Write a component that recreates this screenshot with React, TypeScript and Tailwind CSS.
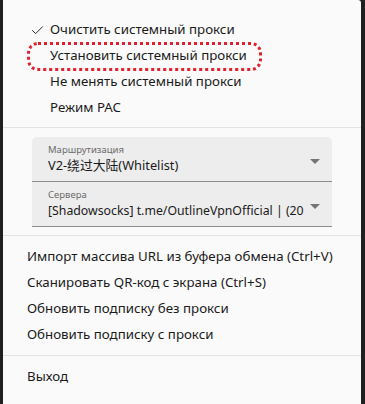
import { Check } from 'lucide-react'

const font = { fontFamily: '"Noto Sans", "Noto Sans CJK SC", sans-serif' }

function Divider() {
  return <div className="h-px bg-[#e3e3e3] my-[6px]" />
}

function Select({ label, value, first, small }: { label: string; value: string; first?: boolean; small?: boolean }) {
  return (
    <div className={`relative bg-[#ededed] border-b border-[#8c8c8c] ${first ? 'rounded-t-[5px]' : ''} h-[45px] pl-4 pr-[20px] flex flex-col justify-center min-w-0`}>
      <div className="text-[9.5px] leading-[13px] text-[#6b6b6b]">{label}</div>
      <div className={`${small ? 'text-[12.3px]' : 'text-[12.8px]'} leading-[19px] text-[#1a1a1a] whitespace-nowrap overflow-hidden`}>{value}</div>
      <svg className="absolute right-[12px] top-[22px]" width="10" height="6" viewBox="0 0 10 6">
        <path d="M0 0 L10 0 L5 5 Z" fill="#757575" />
      </svg>
    </div>
  )
}

export default function App() {
  const proxyItems = [
    { label: 'Очистить системный прокси', checked: true },
    { label: 'Установить системный прокси' },
    { label: 'Не менять системный прокси' },
    { label: 'Режим PAC' },
  ]
  const actions = [
    'Импорт массива URL из буфера обмена (Ctrl+V)',
    'Сканировать QR-код с экрана (Ctrl+S)',
    'Обновить подписку без прокси',
    'Обновить подписку с прокси',
  ]

  return (
    <div className="w-[365px] h-[404px] bg-[#202020] flex pl-[3px] pr-[4px]" style={font}>
      <div className="flex-1 min-w-0 overflow-hidden bg-[#fafafa] rounded-tr-[3px] flex flex-col pt-[17px] text-[#1b1b1b]">
        <div className="flex flex-col">
          {proxyItems.map((it, i) => (
            <div key={i} className="relative h-[26px] flex items-center text-[13.3px]">
              <div className="w-[47px] flex justify-end pr-[5px]">
                {it.checked && <Check size={15} strokeWidth={1.5} className="text-[#1b1b1b]" />}
              </div>
              <span>{it.label}</span>
              {i === 1 && (
                <div className="absolute left-[24px] top-[-1px] w-[235px] h-[29px] rounded-[11px] border-[3px] border-dotted border-[#e0202a]" />
              )}
            </div>
          ))}
        </div>
        <Divider />
        <div className="px-[29px] pt-[3px] pb-[2px]">
          <Select first label="Маршрутизация" value="V2-绕过大陆(Whitelist)" />
          <Select small label="Сервера" value="[Shadowsocks] t.me/OutlineVpnOfficial | (20" />
        </div>
        <Divider />
        <div className="flex flex-col pt-[2px]">
          {actions.map((a) => (
            <div key={a} className="h-[26px] flex items-center pl-[24px] text-[13.3px]">{a}</div>
          ))}
        </div>
        <div className="mt-[1px]">
          <Divider />
        </div>
        <div className="mt-[2px] h-[26px] flex items-center pl-[24px] text-[13.3px]">Выход</div>
      </div>
    </div>
  )
}
